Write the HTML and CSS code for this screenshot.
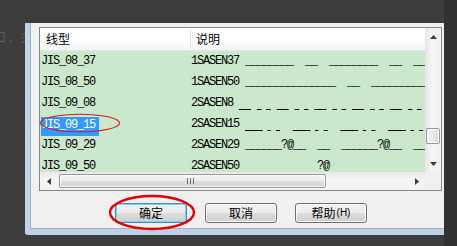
FILE: index.html
```html
<!DOCTYPE html>
<html>
<head>
<meta charset="utf-8">
<link rel="stylesheet" href="styles.css">
</head>
<body>
<div class="desk">
  <div class="ghost">口. 关</div>
  <div class="dialog">
    <div class="panel">
      <div class="listbox">
        <div class="top">
          <div class="view">
            <div class="header">
              <div class="hc c1">线型</div>
              <div class="hc c2">说明</div>
            </div>
            <div class="rows">
              <div class="row"><span class="c1 t">JIS_08_37</span><span class="c2 t">1SASEN37 ________  __  ________  __  ________</span></div>
              <div class="row"><span class="c1 t">JIS_08_50</span><span class="c2 t">1SASEN50 _______________  __  _______________</span></div>
              <div class="row"><span class="c1 t">JIS_09_08</span><span class="c2 t">2SASEN8 <svg class="dash" width="186" height="21"><line x1="0" y1="16.5" x2="186" y2="16.5" stroke="#000" stroke-width="1" stroke-dasharray="12 6 4.5 4.7 4.5 6"/></svg></span></div>
              <div class="row"><span class="c1 t"><span class="sel">JIS_09_15</span></span><span class="c2 t">2SASEN15 <svg class="dash" width="180" height="21"><line x1="0" y1="16.5" x2="180" y2="16.5" stroke="#000" stroke-width="1" stroke-dasharray="17.7 4.7 3.3 5.3 4 12.7"/></svg></span></div>
              <div class="row"><span class="c1 t">JIS_09_29</span><span class="c2 t">2SASEN29 ______?@__  __  ______?@__  __</span></div>
              <div class="row"><span class="c1 t">JIS_09_50</span><span class="c2 t">2SASEN50             ?@</span></div>
            </div>
          </div>
          <div class="vscroll">
            <div class="sbtn"><svg width="7" height="4"><path d="M0 4 L3.5 0 L7 4Z" fill="#3a3a3a"/></svg></div>
            <div class="vtrack"><div class="vthumb"></div></div>
            <div class="sbtn"><svg width="7" height="4"><path d="M0 0 L3.5 4 L7 0Z" fill="#3a3a3a"/></svg></div>
          </div>
        </div>
        <div class="bottom">
          <div class="hscroll">
            <div class="hbtn"><svg width="4" height="7"><path d="M4 0 L0 3.5 L4 7Z" fill="#3a3a3a"/></svg></div>
            <div class="htrack">
              <div class="hthumb"><svg width="7" height="6"><path d="M0.5 0 V6 M3.5 0 V6 M6.5 0 V6" stroke="#6e6e6e" stroke-width="1"/></svg></div>
            </div>
            <div class="hbtn"><svg width="4" height="7"><path d="M0 0 L4 3.5 L0 7Z" fill="#3a3a3a"/></svg></div>
          </div>
          <div class="corner"></div>
        </div>
      </div>
      <div class="buttons">
        <div class="btn default">确定</div>
        <div class="btn">取消</div>
        <div class="btn">帮助<span class="acc">(H)</span></div>
      </div>
    </div>
  </div>
  <svg class="marks" width="457" height="246">
    <ellipse cx="80" cy="123" rx="39.5" ry="8.8" fill="none" stroke="#d41a1a" stroke-width="1.1"/>
    <ellipse cx="152" cy="212.5" rx="42" ry="16.5" fill="none" stroke="#e00000" stroke-width="2.4"/>
  </svg>
</div>
</body>
</html>
```
FILE: styles.css
```css
* { box-sizing: border-box; }
html, body { margin: 0; padding: 0; }
body {
  width: 457px;
  height: 246px;
  overflow: hidden;
  background: #383838;
  font-family: "Noto Sans CJK SC", sans-serif;
}
.desk {
  position: relative;
  width: 457px;
  height: 246px;
  background: linear-gradient(to right, #3c3c3c 0, #3c3c3c 444px, #313131 444px);
  overflow: hidden;
}
.ghost {
  padding-top: 30px;
  margin-left: -6px;
  color: #5e5e5e;
  font-size: 12px;
  line-height: 14px;
  letter-spacing: 3px;
  white-space: pre;
}
.dialog {
  position: absolute;
  left: 25px;
  top: 23px;
  width: 419px;
  height: 212px;
  border-left: 5px solid #c2d4e6;
  border-bottom: 6px solid #bcd0e4;
  border-bottom-left-radius: 3px;
}
.panel {
  height: 206px;
  background: #f0f0f0;
  border-left: 1px solid #a3b3c3;
  border-bottom: 1px solid #a3b3c3;
  padding: 4px 2px 0 8px;
  display: flex;
  flex-direction: column;
}
.listbox {
  width: 403px;
  height: 164px;
  border: 1px solid #828790;
  display: flex;
  flex-direction: column;
  background: #cce8cc;
}
.top {
  height: 144px;
  display: flex;
}
.view {
  width: 385px;
  overflow: hidden;
  display: flex;
  flex-direction: column;
}
.header {
  height: 23px;
  flex: none;
  display: flex;
  background: linear-gradient(#ffffff 0, #ffffff 55%, #f3f4f6 100%);
  border-bottom: 1px solid #e3e6e8;
}
.hc {
  font-size: 12px;
  line-height: 22px;
  color: #000;
}
.hc.c1 {
  width: 151px;
  padding-left: 6px;
  border-right: 1px solid #e2e3e4;
  margin: 1px 0 1px 0;
  line-height: 20px;
}
.hc.c2 { padding-left: 5px; }
.rows {
  height: 121px;
  overflow: hidden;
}
.row {
  height: 21px;
  display: flex;
  white-space: pre;
}
.t {
  font-family: "Liberation Mono", monospace;
  font-size: 12px;
  letter-spacing: -1.2px;
  line-height: 21px;
  color: #000;
}
.row .c1 {
  width: 151px;
  flex: none;
  padding-left: 1px;
}
.row .c2 {
  flex: 1;
  overflow: hidden;
}
.sel {
  display: inline-block;
  vertical-align: top;
  margin-top: 3px;
  height: 19px;
  line-height: 16px;
  padding-right: 4px;
  background: #3399ff;
  color: #fff;
}
.dash {
  vertical-align: top;
}
.vscroll {
  width: 16px;
  display: flex;
  flex-direction: column;
  background: linear-gradient(to right, #e6e6e6, #f5f5f5 40%, #f1f1f1);
}
.sbtn {
  height: 17px;
  flex: none;
  display: flex;
  align-items: center;
  justify-content: center;
}
.sbtn svg { display: block; }
.vtrack {
  flex: 1;
  padding-top: 83px;
}
.vthumb {
  width: 14px;
  height: 16px;
  margin-left: 1px;
  border: 1px solid #979797;
  border-radius: 2px;
  background: linear-gradient(to right, #f6f6f6, #e9e9e9 50%, #d9d9d9);
  box-shadow: inset 0 0 0 1px #fbfbfb;
}
.bottom {
  height: 18px;
  display: flex;
}
.hscroll {
  width: 385px;
  display: flex;
  background: linear-gradient(#e8e8e8, #f5f5f5 40%, #f2f2f2);
}
.hbtn {
  width: 17px;
  flex: none;
  display: flex;
  align-items: center;
  justify-content: center;
}
.hbtn svg { display: block; }
.htrack {
  flex: 1;
  padding: 2px 0 2px 2px;
}
.hthumb {
  width: 267px;
  height: 14px;
  border: 1px solid #999999;
  border-radius: 2px;
  background: linear-gradient(#f6f6f6, #ececec 45%, #dedede 55%, #d3d3d3);
  box-shadow: inset 0 0 0 1px #fafafa;
  display: flex;
  align-items: center;
  justify-content: center;
}
.hthumb svg { display: block; margin-left: -4px; }
.corner {
  width: 16px;
  background: #f0f0f0;
}
.buttons {
  margin-top: 12px;
  padding-left: 76px;
  display: flex;
  gap: 18px;
}
.btn {
  width: 72px;
  height: 20px;
  border: 1px solid #707070;
  border-radius: 3px;
  background: linear-gradient(#f2f2f2 0, #ebebeb 48%, #dddddd 52%, #cfcfcf 100%);
  box-shadow: inset 0 0 0 1px #fbfbfb;
  display: flex;
  align-items: center;
  justify-content: center;
  font-size: 12px;
  line-height: 16px;
  color: #000;
}
.btn.default {
  border-color: #3c8fc4;
  box-shadow: inset 0 0 0 1px #7fd3f2;
}
.acc {
  font-family: "Liberation Sans Narrow", "Liberation Sans", sans-serif;
  font-size: 10px;
  margin-left: 1px;
}
.marks {
  position: absolute;
  left: 0;
  top: 0;
  pointer-events: none;
}
```
